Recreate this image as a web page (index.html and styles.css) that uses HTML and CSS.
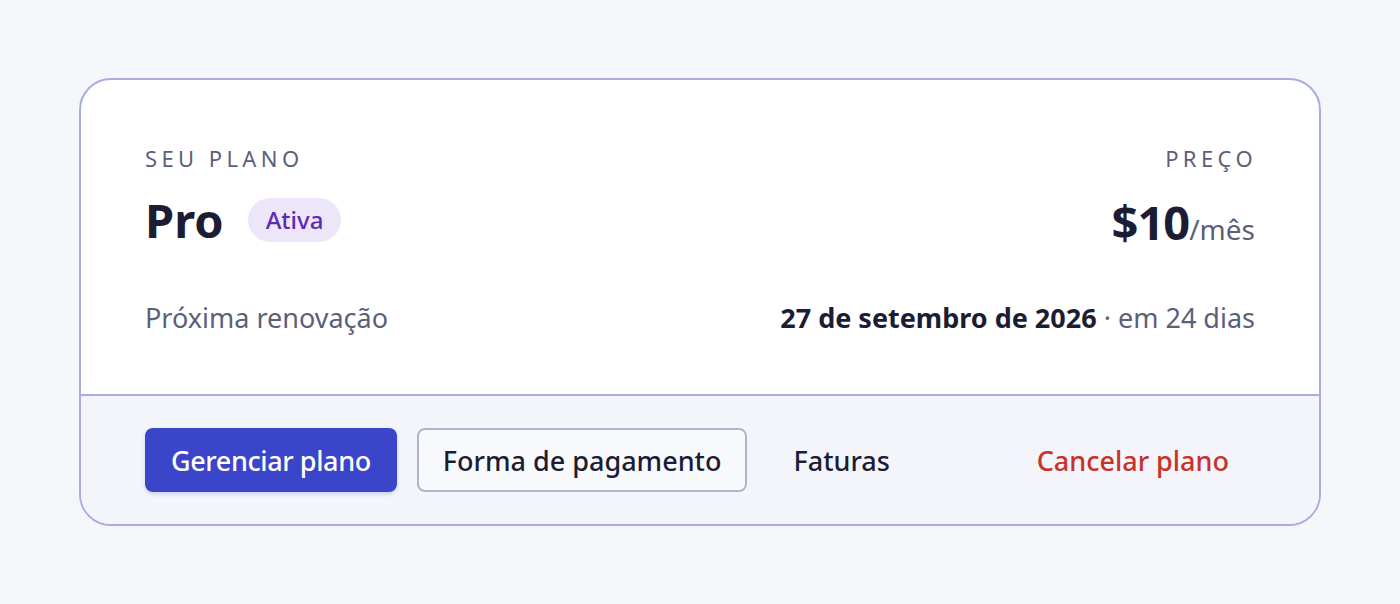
FILE: index.html
```html
<!DOCTYPE html>
<html lang="pt">
<head>
  <meta charset="UTF-8" />
  <title>Seu plano</title>
  <link rel="stylesheet" href="styles.css">
</head>
<body>

<div class="cartao">
  <section class="topo">
    <div class="linha">
      <div>
        <div class="rotulo">SEU PLANO</div>
        <div class="plano">
          <span class="nome">Pro</span>
          <span class="selo">Ativa</span>
        </div>
      </div>
      <div class="direita">
        <div class="rotulo">PREÇO</div>
        <div class="preco"><strong>$10</strong><span>/mês</span></div>
      </div>
    </div>
    <div class="linha renovacao">
      <span class="suave">Próxima renovação</span>
      <span><strong>27 de setembro de 2026</strong> <span class="suave">· em 24 dias</span></span>
    </div>
  </section>

  <section class="acoes">
    <button class="btn primario">Gerenciar plano</button>
    <button class="btn contorno">Forma de pagamento</button>
    <button class="btn texto">Faturas</button>
    <button class="btn perigo">Cancelar plano</button>
  </section>
</div>

</body>
</html>
```

FILE: styles.css
```css
body { margin: 0; background: #f5f6fa; font-family: "Noto Sans", Roboto, sans-serif; color: #1c1d33; }
.cartao { margin: 78px 79px 0; background: white; border: 2px solid #a9acdf; border-radius: 32px; overflow: hidden; }
.topo { padding: 64px 64px 59px; }
.linha { display: flex; justify-content: space-between; align-items: flex-start; }
.direita { text-align: right; }
.rotulo { font-size: 22px; letter-spacing: 4.4px; color: #5c5f7a; line-height: 28px; }
.direita .rotulo { margin-right: -2px; }
.plano { display: flex; align-items: center; gap: 24px; margin-top: 22px; }
.nome { font-size: 47px; font-weight: 700; line-height: 52px; }
.selo { background: #ede6f8; color: #5b2bb5; font-size: 24px; font-weight: 500; line-height: 28px; padding: 8px 18px; border-radius: 22px; }
.preco { margin-top: 22px; line-height: 56px; }
.preco strong { font-size: 47px; font-weight: 700; letter-spacing: -1px; }
.preco span { font-size: 28px; color: #5c5f7a; }
.renovacao { margin-top: 39px; align-items: center; font-size: 27px; line-height: 34px; }
.renovacao strong { font-weight: 700; }
.suave { color: #5c5f7a; }
.acoes { background: #f4f5fa; border-top: 2px solid #a9acdf; padding: 32px 64px; display: flex; gap: 20px; }
.btn { font-family: inherit; font-size: 27px; height: 64px; padding: 0 24px; border-radius: 8px; border: 2px solid transparent; background: none; color: #1c1d33; cursor: pointer; font-weight: 500; }
.primario { background: #3a45c9; color: white; letter-spacing: -0.4px; box-shadow: 0 2px 4px rgba(58,69,201,0.2); }
.contorno { background: #f8f9fc; border-color: #b2b4cc; }
.perigo { color: #c8322a; margin-left: auto; }
```
